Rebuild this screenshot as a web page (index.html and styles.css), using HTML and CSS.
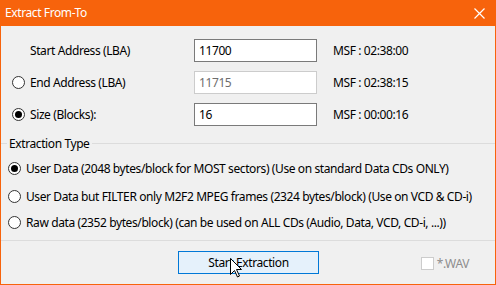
FILE: index.html
```html
<!DOCTYPE html>
<html lang="en">
<head>
    <meta charset="UTF-8">
    <title>Extract From-To</title>
    <link rel="stylesheet" href="styles.css">
</head>
<body>
    <div class="window">
        <div class="titlebar">
            <span class="title">Extract From-To</span>
            <svg class="close" width="11" height="11" viewBox="0 0 11 11"><path d="M0.5 0.5 L10.5 10.5 M10.5 0.5 L0.5 10.5" stroke="#fff" stroke-width="1.2"/></svg>
        </div>

        <div class="content">
            <div class="rows">
                <div class="row">
                    <span class="slot"></span>
                    <span class="label">Start Address (LBA)</span>
                    <div class="input">11700</div>
                    <span class="msf">MSF : 02:38:00</span>
                </div>
                <div class="row">
                    <span class="slot"><span class="radio"></span></span>
                    <span class="label">End Address (LBA)</span>
                    <div class="input disabled">11715</div>
                    <span class="msf">MSF : 02:38:15</span>
                </div>
                <div class="row">
                    <span class="slot"><span class="radio checked"></span></span>
                    <span class="label">Size (Blocks):</span>
                    <div class="input">16</div>
                    <span class="msf">MSF : 00:00:16</span>
                </div>
            </div>

            <div class="group">
                <div class="group-head"><span class="group-title">Extraction Type</span></div>
                <div class="option"><span class="radio checked"></span>User Data (2048 bytes/block for MOST sectors) (Use on standard Data CDs ONLY)</div>
                <div class="option"><span class="radio"></span>User Data but FILTER only M2F2 MPEG frames (2324 bytes/block) (Use on VCD &amp; CD-i)</div>
                <div class="option"><span class="radio"></span>Raw data (2352 bytes/block) (can be used on ALL CDs (Audio, Data, VCD, CD-i, ...))</div>
            </div>

            <div class="footer">
                <button class="btn">Start Extraction</button>
                <label class="wav"><span class="check"></span>*.WAV</label>
            </div>
        </div>

        <svg class="cursor" width="13" height="20" viewBox="0 0 13 20"><path d="M0.5 0.5 L0.5 16.5 L4.5 12.5 L7.5 19 L9.5 18 L6.5 11.5 L11.5 11.5 Z" fill="#fff" stroke="#000" stroke-width="1"/></svg>
    </div>
</body>
</html>
```

FILE: styles.css
```css
body { margin: 0; font-family: "Noto Sans", sans-serif; font-size: 12px; letter-spacing: -0.4px; color: #000; }
.window { position: relative; width: 496px; height: 285px; box-sizing: border-box; border: 1px solid #f7630c; border-top: none; background: #f0f0f0; overflow: hidden; }
.titlebar { height: 26px; background: #f7630c; color: #fff; display: flex; align-items: center; justify-content: space-between; padding: 0 10px 0 4px; }
.title { line-height: 26px; }
.close { display: block; }

.content { padding-top: 13px; }
.rows { display: flex; flex-direction: column; gap: 9px; }
.row { display: flex; align-items: center; height: 23px; padding-left: 11px; }
.slot { width: 13px; margin-right: 5px; display: flex; }
.label { width: 164px; }
.input { width: 123px; height: 23px; box-sizing: border-box; border: 1px solid #7a7a7a; background: #fff; padding: 0 4px; line-height: 21px; margin-right: 16px; }
.input.disabled { border-color: #cccccc; color: #6d6d6d; }

.radio { width: 13px; height: 13px; box-sizing: border-box; border: 1px solid #333; border-radius: 50%; background: #fff; position: relative; flex: none; }
.radio.checked::after { content: ""; position: absolute; left: 2px; top: 2px; width: 7px; height: 7px; border-radius: 50%; background: #000; }

.group { margin-top: 10px; border-bottom: 1px solid #dcdcdc; padding-bottom: 8px; }
.group-head { display: flex; align-items: center; height: 14px; }
.group-head::before { content: ""; width: 6px; border-top: 1px solid #dcdcdc; }
.group-head::after { content: ""; flex: 1; border-top: 1px solid #dcdcdc; margin-left: 2px; }
.group-title { padding-left: 2px; }
.option { display: flex; align-items: center; gap: 5px; height: 20px; padding-left: 7px; white-space: nowrap; }
.group-head + .option { margin-top: 8px; }
.option + .option { margin-top: 8px; }
.option:last-child { margin-top: 6px; }

.footer { display: flex; align-items: flex-start; padding-top: 10px; }
.btn { margin-left: 177px; width: 141px; height: 23px; border: 1px solid #0078d7; background: #e5f1fb; font: inherit; letter-spacing: inherit; color: #000; padding: 0; }
.wav { margin-left: auto; margin-right: 26px; margin-top: 4px; display: flex; align-items: center; gap: 3px; color: #8d8d8d; }
.check { width: 13px; height: 13px; box-sizing: border-box; border: 1px solid #cccccc; background: #fff; }

.cursor { position: absolute; left: 229px; top: 258px; }
```
